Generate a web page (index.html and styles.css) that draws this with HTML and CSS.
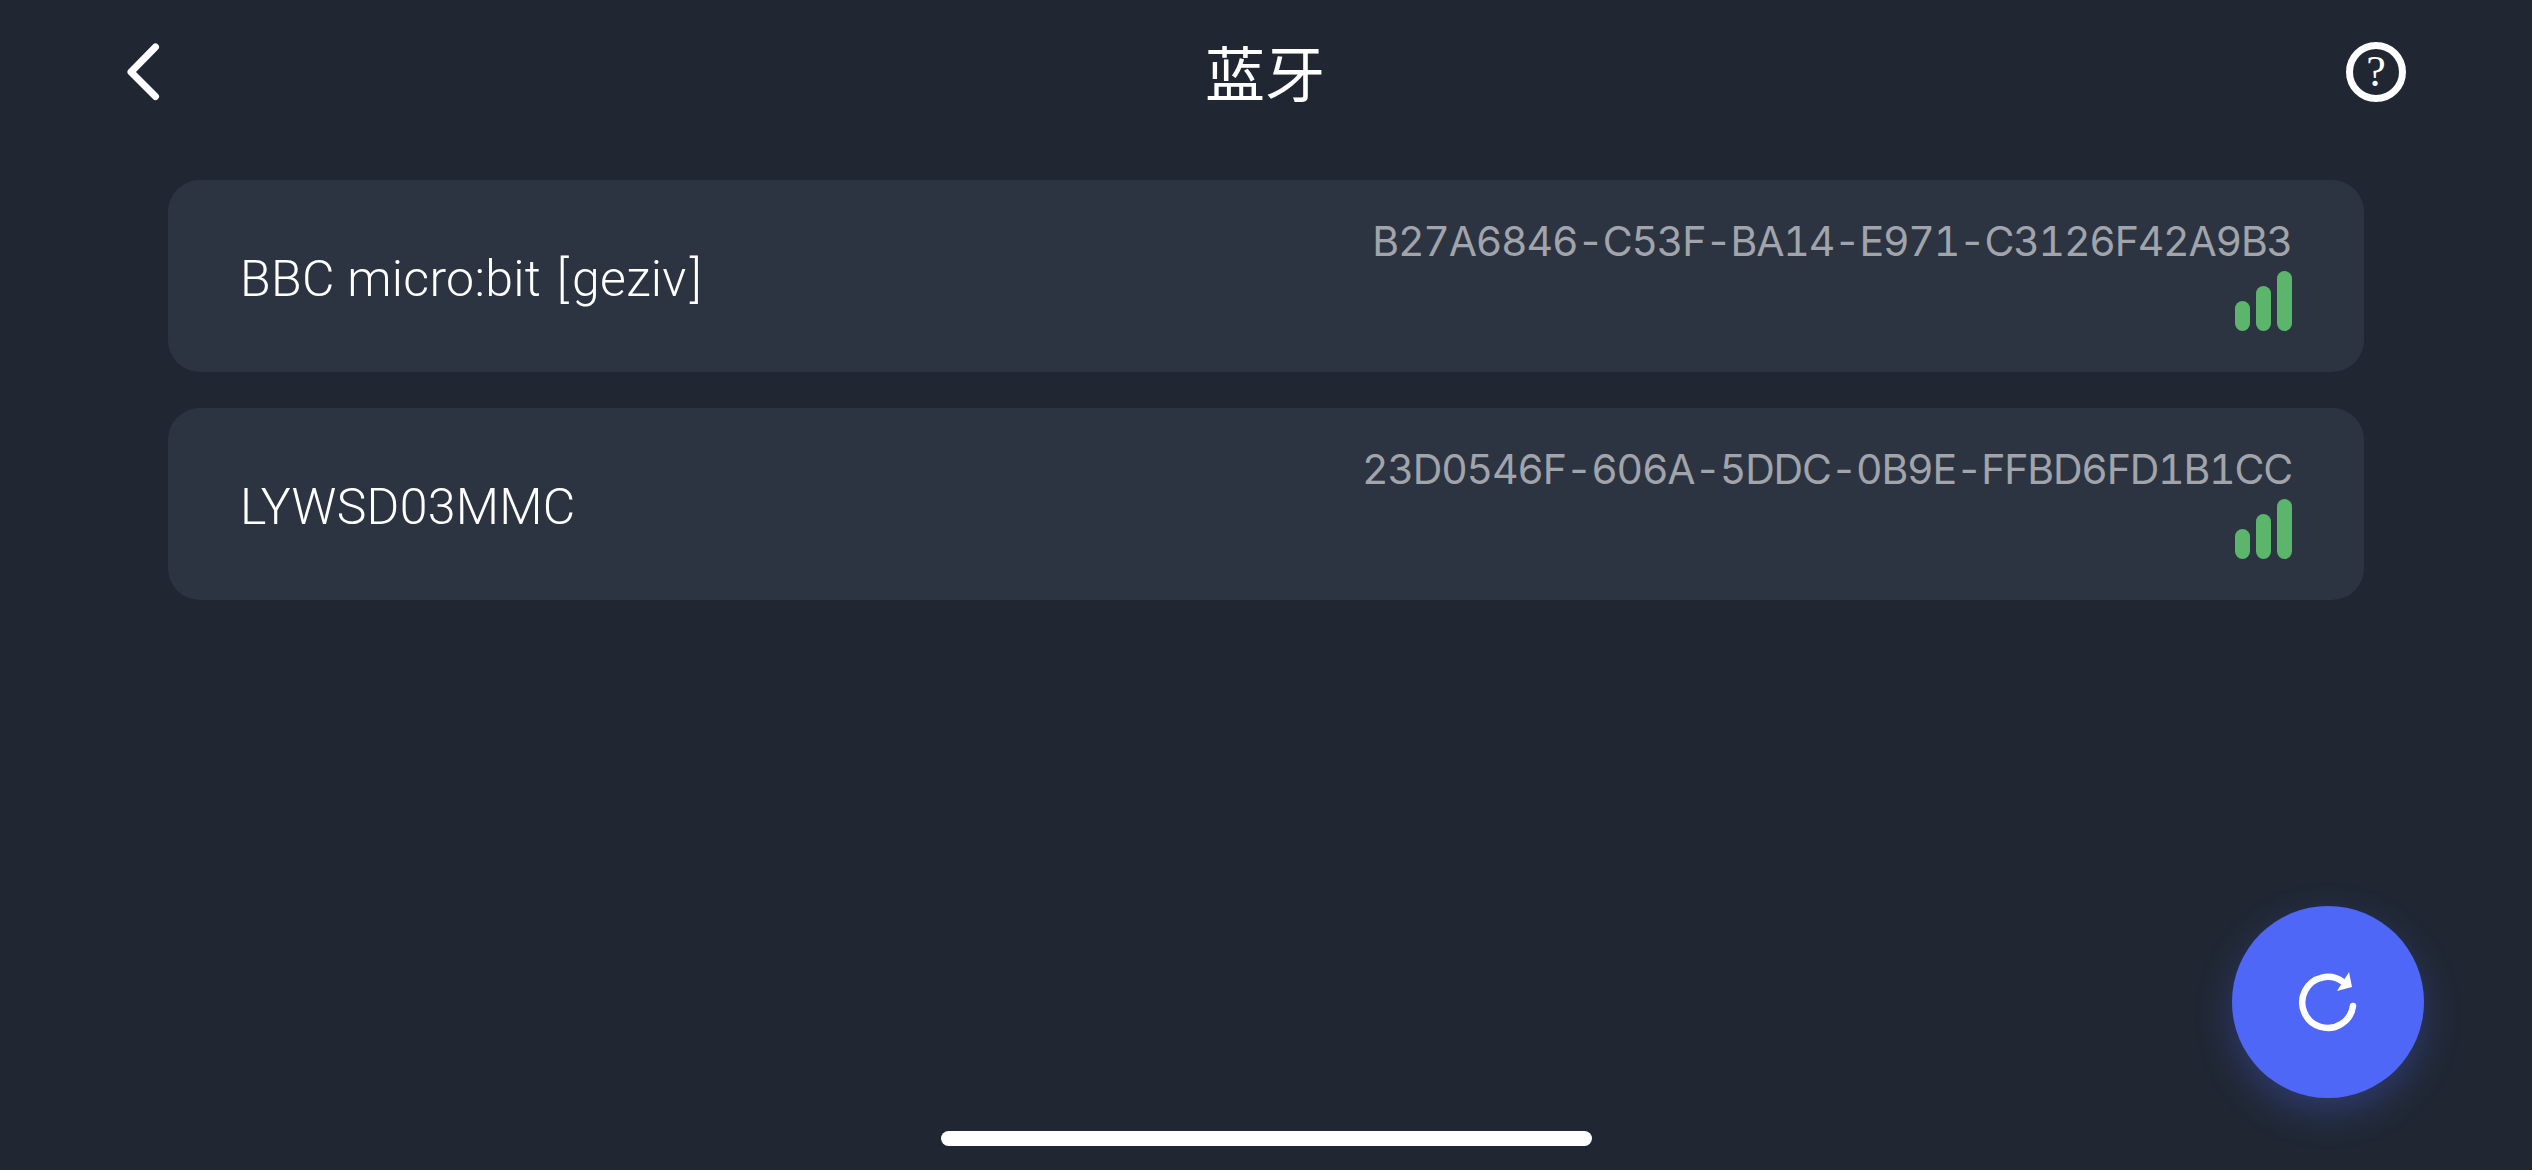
FILE: index.html
```html
<!DOCTYPE html>
<html lang="zh-CN">
<head>
  <meta charset="UTF-8">
  <title>蓝牙</title>
  <link rel="stylesheet" href="styles.css">
</head>
<body>
  <div class="page">
    <header class="topbar">
      <button class="icon-btn back-btn">
        <svg width="40" height="64" viewBox="0 0 40 64">
          <path d="M31.500 7 L7 32 L31.500 56.500" fill="none" stroke="#fff" stroke-width="7" stroke-linecap="round" stroke-linejoin="round"/>
        </svg>
      </button>
      <h1>蓝牙</h1>
      <button class="icon-btn help-btn"><span class="help-mark">?</span></button>
    </header>

    <div class="device-list">
      <div class="device-card">
        <span class="device-name">BBC micro:bit <span class="bracket">[</span>geziv<span class="bracket">]</span></span>
        <div class="device-meta">
          <span class="device-id">B27A6846-C53F-BA14-E971-C3126F42A9B3</span>
          <div class="signal">
            <span class="bar bar-low"></span>
            <span class="bar bar-mid"></span>
            <span class="bar bar-high"></span>
          </div>
        </div>
      </div>
      <div class="device-card">
        <span class="device-name">LYWSD03MMC</span>
        <div class="device-meta">
          <span class="device-id">23D0546F-606A-5DDC-0B9E-FFBD6FD1B1CC</span>
          <div class="signal">
            <span class="bar bar-low"></span>
            <span class="bar bar-mid"></span>
            <span class="bar bar-high"></span>
          </div>
        </div>
      </div>
    </div>

    <button class="refresh-btn">
      <svg width="64" height="64" viewBox="0 0 64 64">
        <path d="M57 36 A25.500 25.500 0 1 1 47 12" fill="none" stroke="#fff" stroke-width="6.500" stroke-linecap="round"/>
        <path d="M53 2 L56 17 L41 21 Z" fill="#fff"/>
      </svg>
    </button>

    <div class="home-bar"></div>
  </div>
</body>
</html>
```

FILE: styles.css
```css
:root {
  --bg-color: #202733;
  --card-bg: #2d3441;
  --muted: #a1a4ab;
  --green: #5bb56a;
  --blue: #4f67f6;
}

* {
  box-sizing: border-box;
}

body {
  margin: 0;
  background-color: var(--bg-color);
  color: #fff;
  font-family: Roboto, "Noto Sans CJK SC", sans-serif;
}

.page {
  position: relative;
  display: flex;
  flex-direction: column;
  height: 100vh;
  overflow: hidden;
}

.topbar {
  display: grid;
  grid-template-columns: 1fr auto 1fr;
  align-items: center;
  height: 144px;
  padding: 0 126px 0 124px;
}

.topbar h1 {
  margin: 0 0 3px;
  font-family: "Noto Sans CJK SC", sans-serif;
  font-size: 60px;
  font-weight: 400;
  line-height: 1;
}

.icon-btn {
  display: flex;
  padding: 0;
  background: none;
  border: none;
  color: #fff;
}

.help-btn {
  justify-self: end;
  align-items: center;
  justify-content: center;
  width: 60px;
  height: 60px;
  border: 7.500px solid #fff;
  border-radius: 50%;
}

.help-mark {
  font-family: "Liberation Serif", serif;
  font-size: 44px;
  line-height: 1;
}

.device-list {
  display: flex;
  flex-direction: column;
  gap: 36px;
  margin: 36px 168px 0 168px;
}

.device-card {
  display: flex;
  justify-content: space-between;
  align-items: center;
  height: 192px;
  padding: 0 72px 0 72px;
  background-color: var(--card-bg);
  border-radius: 32px;
}

.device-name {
  margin-top: 5px;
  font-size: 50px;
  font-weight: 300;
  letter-spacing: 0.300px;
}

.bracket {
  margin: 0 3px;
}

.device-meta {
  display: flex;
  flex-direction: column;
  align-items: flex-end;
  gap: 5px;
  margin-bottom: 6px;
}

.device-id {
  color: var(--muted);
  font-family: Inter, sans-serif;
  font-size: 41px;
  font-weight: 400;
  font-variant-numeric: tabular-nums;
  letter-spacing: -1.200px;
  line-height: 50px;
}

.signal {
  display: flex;
  align-items: flex-end;
  gap: 6px;
  height: 60px;
}

.bar {
  width: 15px;
  background-color: var(--green);
  border-radius: 8px;
}

.bar-low {
  height: 30px;
}

.bar-mid {
  height: 45px;
}

.bar-high {
  height: 60px;
}

.refresh-btn {
  position: absolute;
  left: 2232px;
  top: 906px;
  display: flex;
  align-items: center;
  justify-content: center;
  width: 192px;
  height: 192px;
  padding: 0;
  background-color: var(--blue);
  border: none;
  border-radius: 50%;
  box-shadow: 0 14px 36px rgba(79, 103, 246, 0.3);
}

.home-bar {
  width: 651px;
  height: 15px;
  margin: auto auto 24px;
  background-color: #fff;
  border-radius: 8px;
}
```
